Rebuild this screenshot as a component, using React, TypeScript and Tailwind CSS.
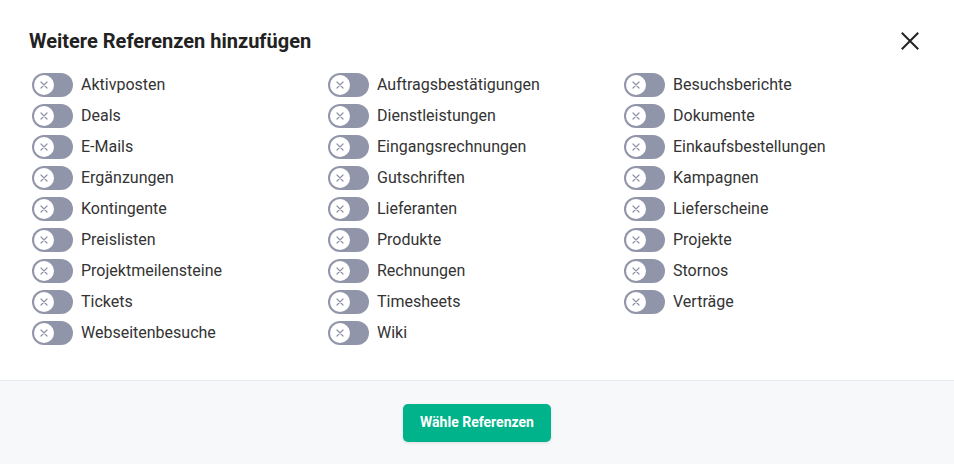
import React from "react";

const columns: string[][] = [
  ["Aktivposten", "Deals", "E-Mails", "Ergänzungen", "Kontingente", "Preislisten", "Projektmeilensteine", "Tickets", "Webseitenbesuche"],
  ["Auftragsbestätigungen", "Dienstleistungen", "Eingangsrechnungen", "Gutschriften", "Lieferanten", "Produkte", "Rechnungen", "Timesheets", "Wiki"],
  ["Besuchsberichte", "Dokumente", "Einkaufsbestellungen", "Kampagnen", "Lieferscheine", "Projekte", "Stornos", "Verträge"],
];

function Toggle() {
  return (
    <span className="flex h-[24px] w-[41px] shrink-0 items-center rounded-full bg-[#9195a9] pl-[2px]">
      <span className="flex h-[20px] w-[20px] items-center justify-center rounded-full bg-white">
        <svg width="8" height="8" viewBox="0 0 8 8" fill="none" stroke="#8e92a6" strokeWidth="1.2" strokeLinecap="round">
          <path d="M1 1l6 6M7 1L1 7" />
        </svg>
      </span>
    </span>
  );
}

export default function App() {
  return (
    <div className="flex h-[464px] w-[954px] flex-col bg-white" style={{ fontFamily: "Roboto, 'Liberation Sans', sans-serif" }}>
      <div className="flex-1 pl-[29px] pr-[32px]">
        <div className="flex items-center justify-between pt-[29px]">
          <h2 className="text-[20px] font-bold leading-[24px] text-[#222]">Weitere Referenzen hinzufügen</h2>
          <button className="flex h-[24px] w-[24px] items-center justify-center text-[#222]">
            <svg width="18" height="18" viewBox="0 0 18 18" fill="none" stroke="currentColor" strokeWidth="2" strokeLinecap="square">
              <path d="M1.5 1.5l15 15M16.5 1.5l-15 15" />
            </svg>
          </button>
        </div>
        <div className="mt-[16px] grid grid-cols-[296px_296px_296px] pl-[3px]">
          {columns.map((col, i) => (
            <div key={i} className="flex flex-col">
              {col.map((label) => (
                <div key={label} className="flex h-[31px] items-center gap-[8px]">
                  <Toggle />
                  <span className="text-[16px] leading-[20px] text-[#333]">{label}</span>
                </div>
              ))}
            </div>
          ))}
        </div>
      </div>
      <div className="flex h-[84px] items-center justify-center border-t border-[#e8e9ee] bg-[#f7f8fa]">
        <button className="h-[38px] w-[148px] rounded-[5px] bg-[#00b38a] text-[14px] font-bold text-white shadow-[0_1px_3px_rgba(0,0,0,0.12)]">
          Wähle Referenzen
        </button>
      </div>
    </div>
  );
}
